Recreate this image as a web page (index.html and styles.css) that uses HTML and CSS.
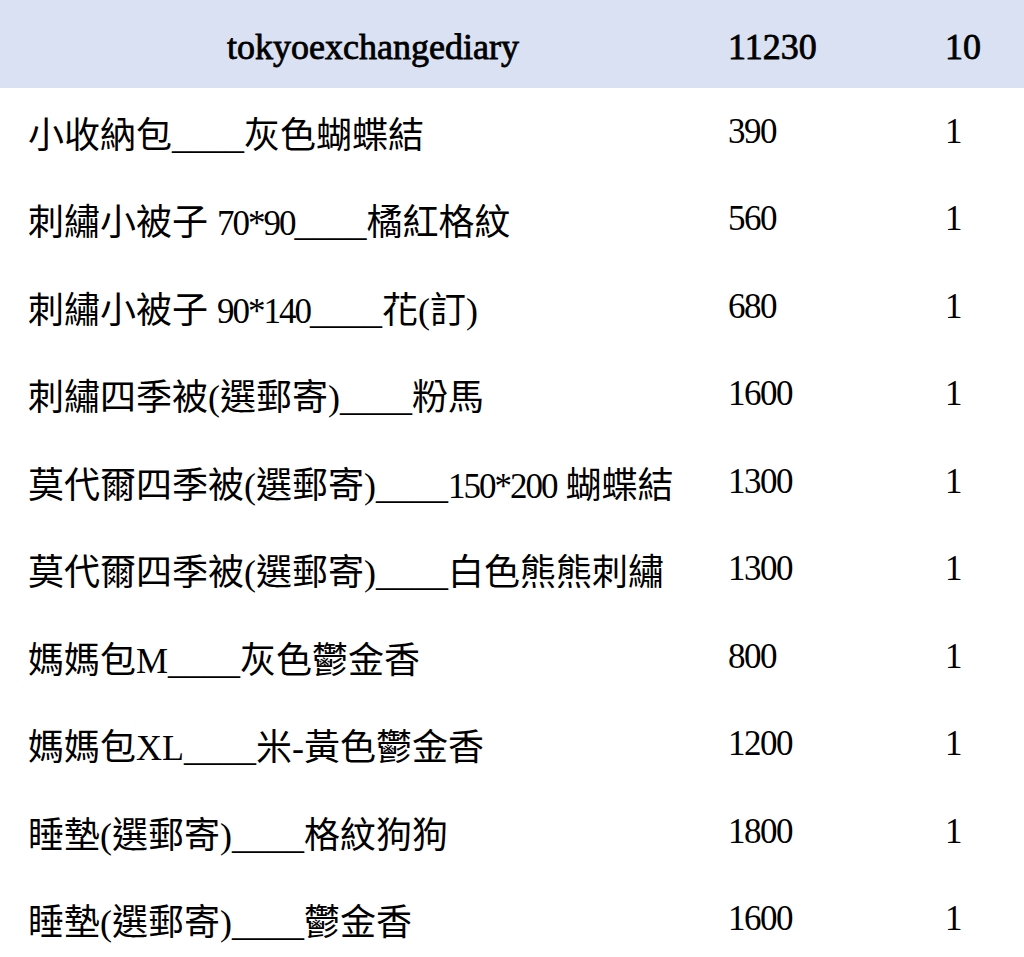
FILE: index.html
```html
<!DOCTYPE html>
<html lang="zh-Hant">
<head>
<meta charset="utf-8">
<title>訂單</title>
<link rel="stylesheet" href="styles.css">
</head>
<body>
<table class="orders">
  <colgroup>
    <col class="c-name">
    <col class="c-price">
    <col class="c-qty">
  </colgroup>
  <thead>
    <tr class="head">
      <th class="name">tokyoexchangediary</th>
      <th class="num">11230</th>
      <th class="num">10</th>
    </tr>
  </thead>
  <tbody>
    <tr><td class="name">小收納包____灰色蝴蝶結</td><td class="num">390</td><td class="num">1</td></tr>
    <tr><td class="name">刺繡小被子 <span class="dig">70*90</span>____橘紅格紋</td><td class="num">560</td><td class="num">1</td></tr>
    <tr><td class="name">刺繡小被子 <span class="dig">90*140</span>____花(訂)</td><td class="num">680</td><td class="num">1</td></tr>
    <tr><td class="name">刺繡四季被(選郵寄)____粉馬</td><td class="num">1600</td><td class="num">1</td></tr>
    <tr><td class="name">莫代爾四季被(選郵寄)____<span class="dig">150*200</span> 蝴蝶結</td><td class="num">1300</td><td class="num">1</td></tr>
    <tr><td class="name">莫代爾四季被(選郵寄)____白色熊熊刺繡</td><td class="num">1300</td><td class="num">1</td></tr>
    <tr><td class="name">媽媽包M____灰色鬱金香</td><td class="num">800</td><td class="num">1</td></tr>
    <tr><td class="name">媽媽包XL____米-黃色鬱金香</td><td class="num">1200</td><td class="num">1</td></tr>
    <tr><td class="name">睡墊(選郵寄)____格紋狗狗</td><td class="num">1800</td><td class="num">1</td></tr>
    <tr><td class="name">睡墊(選郵寄)____鬱金香</td><td class="num">1600</td><td class="num">1</td></tr>
  </tbody>
</table>
</body>
</html>
```
FILE: styles.css
```css
html, body {
  margin: 0;
  padding: 0;
  background: #ffffff;
}

body {
  font-family: "Liberation Serif", "Noto Sans CJK TC", serif;
  font-size: 34px;
  color: #000000;
}

.orders {
  width: 1024px;
  border-collapse: collapse;
  border-spacing: 0;
  table-layout: fixed;
}

.c-name { width: 718px; }
.c-price { width: 217px; }
.c-qty { width: 89px; }

.orders th,
.orders td {
  padding: 0;
  vertical-align: middle;
  white-space: nowrap;
  text-align: left;
}

.head {
  height: 88px;
  background: #d9e1f2;
}

.head th {
  font-weight: normal;
  font-size: 36px;
  padding-top: 5px;
  -webkit-text-stroke: 0.8px #000000;
}

.head th.name {
  text-align: center;
  padding-left: 28px;
}

.orders tbody tr {
  height: 87.5px;
}

.orders td.name {
  padding-left: 28px;
  font-size: 36px;
}

.dig {
  font-size: 35px;
  letter-spacing: -2px;
}

.orders .num {
  padding-left: 10px;
}

.orders td.num {
  font-size: 35px;
  letter-spacing: -1.5px;
}
```
